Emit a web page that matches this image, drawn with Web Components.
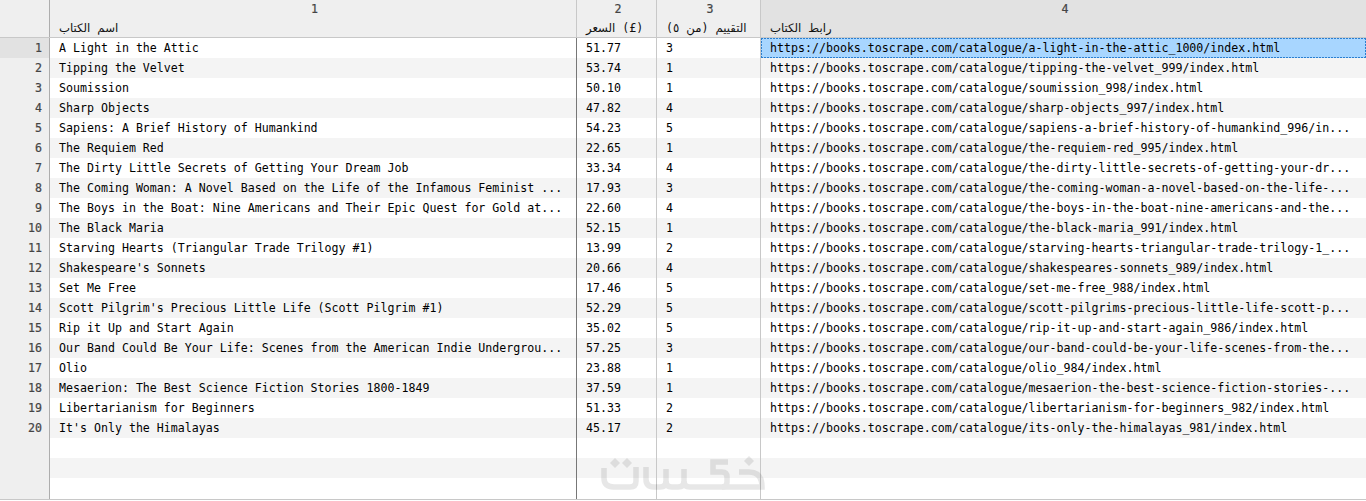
<!DOCTYPE html>
<html lang="ar">
<head>
<meta charset="utf-8">
<title>Books</title>
<style>
html,body{margin:0;padding:0;background:#fff;overflow:hidden}
body{width:1366px;height:501px;font-family:"DejaVu Sans Mono",monospace}
</style>
</head>
<body>
<data-sheet>
  <sheet-head>
    <head-cell kind="corner"></head-cell>
    <head-cell num="1" label="اسم الكتاب"></head-cell>
    <head-cell num="2" label="السعر (£)"></head-cell>
    <head-cell num="3" label="التقييم (من ٥)"></head-cell>
    <head-cell num="4" label="رابط الكتاب" kind="active"></head-cell>
  </sheet-head>
  <sheet-body id="b"></sheet-body>
  <khamsat-mark></khamsat-mark>
</data-sheet>
<script>
const COLS='50px 527px 80px 104px 1fr';
class DataSheet extends HTMLElement{
  constructor(){super();this.attachShadow({mode:'open'}).innerHTML=`<style>
  :host{display:flex;flex-direction:column;position:relative;width:1366px;height:501px;overflow:hidden;background:#fff;
  font:11.62px/20px "DejaVu Sans Mono",monospace;color:#000;--cols:${COLS}}
  </style><slot></slot>`;}
}
class SheetHead extends HTMLElement{
  constructor(){super();this.attachShadow({mode:'open'}).innerHTML=`<style>
  :host{display:grid;grid-template-columns:var(--cols);height:37px;border-bottom:1px solid #c8c8c8;flex:none}
  </style><slot></slot>`;}
}
class HeadCell extends HTMLElement{
  constructor(){super();this.attachShadow({mode:'open'}).innerHTML=`<style>
  :host{display:flex;flex-direction:column;background:#efefef;border-right:1px solid #c8c8c8;min-width:0}
  :host([kind=corner]){border-right-color:#adadad}
  :host([kind=active]){background:#e2e2e2;border-right:0}
  .n{height:18px;padding-left:3px;text-align:center;line-height:18px;color:#444;-webkit-text-stroke:.2px #444}
  .l{height:19px;line-height:21px;padding-left:9px;white-space:pre;color:#111;direction:ltr}
  .ar{font:11.7px/21px "DejaVu Sans",sans-serif}
  </style><div class="n"></div><div class="l"></div>`;}
  connectedCallback(){
    const s=this.shadowRoot;
    s.querySelector('.n').textContent=this.getAttribute('num')||'';
    const l=s.querySelector('.l'),t=this.getAttribute('label')||'';
    t.split(/([\u0600-\u06ff]+)/).forEach(p=>{
      if(!p)return;
      if(/[\u0600-\u06ff]/.test(p)){const a=document.createElement('span');a.className='ar';a.textContent=p;l.append(a);}
      else l.append(p);
    });
  }
}
class SheetBody extends HTMLElement{
  constructor(){super();this.attachShadow({mode:'open'}).innerHTML=`<style>
  :host{display:block;flex:none;height:461px;border-bottom:1px solid #c8c8c8}
  </style><slot></slot>`;}
}
class SheetRow extends HTMLElement{
  constructor(){super();this.attachShadow({mode:'open'}).innerHTML=`<style>
  :host{display:grid;grid-template-columns:var(--cols);height:20px;background:#fff}
  :host(:nth-child(even)){background:#f4f4f4}
  :host(.tail){height:21px}
  </style><slot></slot>`;}
}
class RowNum extends HTMLElement{
  constructor(){super();this.attachShadow({mode:'open'}).innerHTML=`<style>
  :host{display:block;background:#efefef;border-right:1px solid #adadad;text-align:right;padding-right:7px;color:#444;-webkit-text-stroke:.2px #444}
  :host(.on){background:#e2e2e2}
  </style><slot></slot>`;}
}
class SheetCell extends HTMLElement{
  constructor(){super();this.attachShadow({mode:'open'}).innerHTML=`<style>
  :host{display:block;box-sizing:border-box;padding-left:9px;white-space:pre;overflow:hidden;border-right:1px solid #c8c8c8;min-width:0}
  :host(.dark){border-right-color:#777}
  :host(.last){border-right:0}
  :host(.sel){height:20px;background-color:#a8d6ff;background-repeat:no-repeat;
    background-image:repeating-linear-gradient(90deg,#2b7fd0 0 2px,transparent 2px 3px),repeating-linear-gradient(90deg,#2b7fd0 0 2px,transparent 2px 3px),repeating-linear-gradient(0deg,#2b7fd0 0 2px,transparent 2px 3px),repeating-linear-gradient(0deg,#2b7fd0 0 2px,transparent 2px 3px);
    background-size:100% 1px,100% 1px,1px 100%,1px 100%;background-position:0 0,0 100%,0 0,100% 0}
  </style><slot></slot>`;}
}
class KhamsatMark extends HTMLElement{
  constructor(){super();this.attachShadow({mode:'open'}).innerHTML=`<style>
  :host{position:absolute;left:598px;top:452px;display:block;width:170px;height:44px;pointer-events:none}
  svg{display:block;opacity:.09}
  </style>
  <svg width="170" height="44" viewBox="598 452 170 44" fill="none" stroke="#000" stroke-width="5.5">
    <path d="M604 468V478Q604 487 614 487H630Q636 487 636 481V467"/>
    <path d="M646 467V479Q646 487 654 487H660Q666 487 666 481V469"/>
    <path d="M666 481Q666 487 672 487H678Q684 487 684 481V469"/>
    <path d="M684 481Q684 487 690 487H722Q727 487 727 482V477Q727 472 722 472H713V462H728"/>
    <path d="M722 487H762Q762 472 749 472H739"/>
    <g fill="#000" stroke="none">
      <path d="M615 458l5 5-5 5-5-5z"/>
      <path d="M627 458l5 5-5 5-5-5z"/>
      <path d="M749 456l5 5-5 5-5-5z"/>
    </g>
  </svg>`;}
}
customElements.define('data-sheet',DataSheet);
customElements.define('sheet-head',SheetHead);
customElements.define('head-cell',HeadCell);
customElements.define('sheet-body',SheetBody);
customElements.define('sheet-row',SheetRow);
customElements.define('row-num',RowNum);
customElements.define('sheet-cell',SheetCell);
customElements.define('khamsat-mark',KhamsatMark);

const C='https://books.toscrape.com/catalogue/';
const data=[
["A Light in the Attic","51.77","3","a-light-in-the-attic_1000/index.html"],
["Tipping the Velvet","53.74","1","tipping-the-velvet_999/index.html"],
["Soumission","50.10","1","soumission_998/index.html"],
["Sharp Objects","47.82","4","sharp-objects_997/index.html"],
["Sapiens: A Brief History of Humankind","54.23","5","sapiens-a-brief-history-of-humankind_996/in..."],
["The Requiem Red","22.65","1","the-requiem-red_995/index.html"],
["The Dirty Little Secrets of Getting Your Dream Job","33.34","4","the-dirty-little-secrets-of-getting-your-dr..."],
["The Coming Woman: A Novel Based on the Life of the Infamous Feminist ...","17.93","3","the-coming-woman-a-novel-based-on-the-life-..."],
["The Boys in the Boat: Nine Americans and Their Epic Quest for Gold at...","22.60","4","the-boys-in-the-boat-nine-americans-and-the..."],
["The Black Maria","52.15","1","the-black-maria_991/index.html"],
["Starving Hearts (Triangular Trade Trilogy #1)","13.99","2","starving-hearts-triangular-trade-trilogy-1_..."],
["Shakespeare's Sonnets","20.66","4","shakespeares-sonnets_989/index.html"],
["Set Me Free","17.46","5","set-me-free_988/index.html"],
["Scott Pilgrim's Precious Little Life (Scott Pilgrim #1)","52.29","5","scott-pilgrims-precious-little-life-scott-p..."],
["Rip it Up and Start Again","35.02","5","rip-it-up-and-start-again_986/index.html"],
["Our Band Could Be Your Life: Scenes from the American Indie Undergrou...","57.25","3","our-band-could-be-your-life-scenes-from-the..."],
["Olio","23.88","1","olio_984/index.html"],
["Mesaerion: The Best Science Fiction Stories 1800-1849","37.59","1","mesaerion-the-best-science-fiction-stories-..."],
["Libertarianism for Beginners","51.33","2","libertarianism-for-beginners_982/index.html"],
["It's Only the Himalayas","45.17","2","its-only-the-himalayas_981/index.html"]
];
const body=document.getElementById('b');
const cell=(t,c)=>{const e=document.createElement('sheet-cell');if(c)e.className=c;e.textContent=t;return e;};
const addRow=(n,vals,i)=>{
  const r=document.createElement('sheet-row');
  const h=document.createElement('row-num');h.textContent=n;if(i===0)h.className='on';
  r.append(h,cell(vals[0],'dark'),cell(vals[1]),cell(vals[2]),cell(vals[3],i===0?'last sel':'last'));
  body.append(r);return r;
};
data.forEach((d,i)=>addRow(String(i+1),[d[0],d[1],d[2],C+d[3]],i));
addRow('',['','','',''],-1);addRow('',['','','',''],-1);addRow('',['','','',''],-1).classList.add('tail');
</script>
</body>
</html>
